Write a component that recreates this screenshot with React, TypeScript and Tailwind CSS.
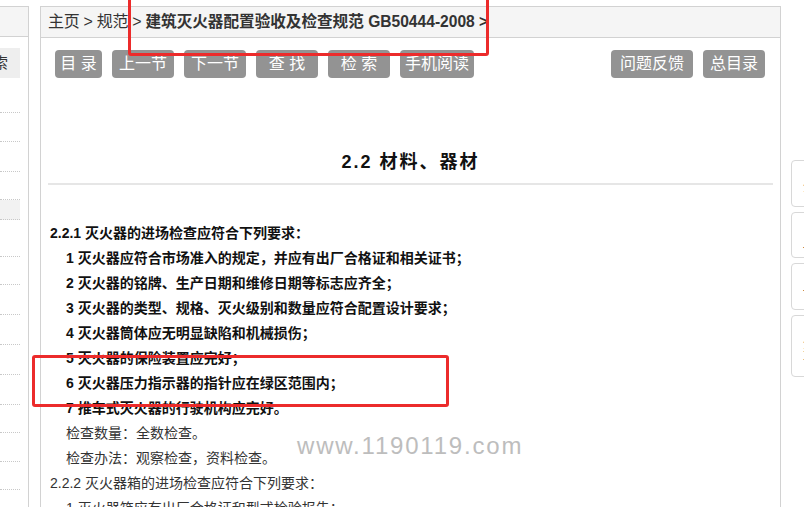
import React from 'react';

// left nav rows (heights measured from the dotted separators)
const sideRows = [35, 29, 30, 28, 20, 37, 28, 30, 30, 30, 30, 28, 29, 28, 30];

const navButtons = [
  { label: '目 录', w: 'w-[47px]' },
  { label: '上一节', w: 'w-[62px]' },
  { label: '下一节', w: 'w-[62px]' },
  { label: '查 找', w: 'w-[62px]' },
  { label: '检 索', w: 'w-[62px]' },
  { label: '手机阅读', w: 'w-[74px]' },
];

const boldLines = [
  '1 灭火器应符合市场准入的规定，并应有出厂合格证和相关证书；',
  '2 灭火器的铭牌、生产日期和维修日期等标志应齐全；',
  '3 灭火器的类型、规格、灭火级别和数量应符合配置设计要求；',
  '4 灭火器筒体应无明显缺陷和机械损伤；',
  '5 灭火器的保险装置应完好；',
  '6 灭火器压力指示器的指针应在绿区范围内；',
  '7 推车式灭火器的行驶机构应完好。',
];

const Button = ({ label, w }: { label: string; w: string }) => (
  <span
    className={`${w} h-[28px] inline-flex items-center justify-center rounded-[4px] bg-[#939393] text-[16px] text-white whitespace-pre`}
  >
    {label}
  </span>
);

export default function App() {
  return (
    <div className="relative h-[507px] w-[804px] overflow-hidden bg-white pt-[6px] font-['Liberation_Sans','Noto_Sans_CJK_SC',sans-serif] text-[#333]">
      <div className="flex items-start">
        {/* Left nav (scrolled mostly off screen) */}
        <div className="w-[29px] h-[560px] shrink-0 border-t border-r border-[#d2d2d2]">
          <div className="h-[30px] bg-[#f5f5f5] border-b border-[#d2d2d2]" />
          <div className="mt-[11px] w-[20px] h-[30px] bg-[#eeeeee] flex items-center justify-end pr-[12px] overflow-hidden text-[15px] text-[#333] whitespace-nowrap">
            检索
          </div>
          <div className="w-[20px]">
            {sideRows.map((h, i) => (
              <div
                key={i}
                style={{ height: h }}
                className={`border-b border-dotted border-[#c8c8c8] ${i === 4 ? 'bg-[#f2f2f2]' : ''}`}
              />
            ))}
          </div>
        </div>

        {/* Main panel */}
        <div className="ml-[11px] w-[741px] h-[560px] shrink-0 border-t border-l border-r border-[#d2d2d2]">
          <div className="h-[31px] bg-[#f5f5f5] border-b border-[#d2d2d2] flex items-center pl-[7px] text-[16px] text-[#333] whitespace-pre">
            <span className="tracking-[-0.3px]">主页 &gt; 规范 &gt; </span>
            <span className="font-bold text-[15.6px]">建筑灭火器配置验收及检查规范 GB50444-2008 &gt;</span>
          </div>

          <div className="mt-[12px] flex items-center justify-between pl-[14px] pr-[15px]">
            <div className="flex gap-[10px]">
              {navButtons.map((b) => (
                <Button key={b.label} label={b.label} w={b.w} />
              ))}
            </div>
            <div className="flex gap-[10px]">
              <Button label="问题反馈" w="w-[82px]" />
              <Button label="总目录" w="w-[62px]" />
            </div>
          </div>

          <h2 className="mt-[72px] h-[24px] leading-[24px] text-center text-[18px] font-bold tracking-[2px] text-[#111]">
            2.2 材料、器材
          </h2>
          <div className="mt-[9px] mx-[7px] h-[2px] bg-[#e6e6e6]" />

          <div className="mt-[36px] pl-[9px] text-[14px] leading-[25px]">
            <p className="font-bold text-[#111]">2.2.1 灭火器的进场检查应符合下列要求：</p>
            {boldLines.map((l) => (
              <p key={l} className="pl-[16px] font-bold text-[#111]">
                {l}
              </p>
            ))}
            <p className="pl-[16px]">检查数量：全数检查。</p>
            <p className="pl-[16px]">检查办法：观察检查，资料检查。</p>
            <p>2.2.2 灭火器箱的进场检查应符合下列要求：</p>
            <p className="pl-[16px]">1 灭火器箱应有出厂合格证和型式检验报告；</p>
          </div>
        </div>

        {/* Right floating tool boxes */}
        <div className="ml-[10px] mt-[154px] flex flex-col gap-[5px] text-[12px] leading-[13px] text-[#222]">
          <div className="w-[40px] h-[47px] rounded-[4px] border border-[#d8d8d8] pl-[11px] pt-[20px] whitespace-nowrap">
            <div>分享</div>
          </div>
          <div className="w-[40px] h-[46px] rounded-[4px] border border-[#d8d8d8] pl-[11px] pt-[30px] whitespace-nowrap">
            <div>一</div>
          </div>
          <div className="w-[40px] h-[47px] rounded-[4px] border border-[#d8d8d8] pl-[11px] pt-[22px] whitespace-nowrap">
            <div>一</div>
          </div>
          <div className="w-[40px] h-[62px] rounded-[4px] border border-[#d8d8d8] pl-[11px] pt-[22px] whitespace-nowrap">
            <div>分</div>
            <div>享</div>
          </div>
        </div>
      </div>

      {/* Watermark */}
      <div className="absolute left-[297px] top-[432px] text-[24px] leading-[28px] tracking-[1.8px] text-[#bdbdbd] whitespace-nowrap">
        www.1190119.com
      </div>

      {/* Red annotation boxes */}
      <div className="absolute left-[128px] top-[-3px] w-[361px] h-[59px] rounded-[3px] border-[3px] border-[#ec2b2b]" />
      <div className="absolute left-[32px] top-[355px] w-[417px] h-[52px] rounded-[3px] border-[3px] border-[#ec2b2b]" />
    </div>
  );
}
